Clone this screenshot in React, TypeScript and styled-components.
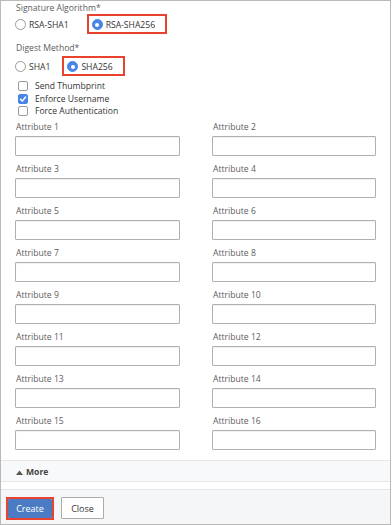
import React from 'react';
import styled, { createGlobalStyle } from 'styled-components';

const Global = createGlobalStyle`
  html, body { margin: 0; padding: 0; background: #fff; }
  body { font-family: "Open Sans", "Noto Sans", sans-serif; -webkit-font-smoothing: antialiased; }
  * { box-sizing: border-box; }
`;

const Panel = styled.div`
  width: 391px;
  height: 525px;
  border: 1px solid #b9b9b9;
  display: flex;
  flex-direction: column;
  background: #fff;
`;

const Body = styled.div`
  flex: 1;
  padding: 1px 14px 10px 14px;
  display: flex;
  flex-direction: column;
`;

const GroupLabel = styled.div<{ $mt?: number }>`
  font-size: 8.6px;
  line-height: 12px;
  height: 12px;
  color: #5c5c5c;
  margin-top: ${(p) => p.$mt ?? 0}px;
  padding-left: 1px;
  white-space: nowrap;
`;

const RadioRow = styled.div<{ $gap: number; $mt?: number }>`
  display: flex;
  align-items: center;
  height: 20px;
  gap: ${(p) => p.$gap}px;
  margin-top: ${(p) => p.$mt ?? 0}px;
`;

const RadioOption = styled.div<{ $boxed?: boolean }>`
  display: flex;
  align-items: center;
  gap: 3px;
  height: 20px;
  padding: ${(p) => (p.$boxed ? '1px 10px 0 3px' : '1px 0 0 0')};
  border: ${(p) => (p.$boxed ? '2px solid #e8432f' : 'none')};
  font-size: 8.6px;
  color: #333;
  white-space: nowrap;
`;

const RadioDot = styled.span<{ $on?: boolean }>`
  width: 11px;
  height: 11px;
  border-radius: 50%;
  flex: none;
  border: 1px solid ${(p) => (p.$on ? '#4a86e8' : '#9a9a9a')};
  background: ${(p) => (p.$on ? '#4a86e8' : '#fff')};
  display: flex;
  align-items: center;
  justify-content: center;
  &::after {
    content: '';
    width: 4px;
    height: 4px;
    border-radius: 50%;
    background: #fff;
    display: ${(p) => (p.$on ? 'block' : 'none')};
  }
`;

const CheckList = styled.div`
  margin-top: 4px;
  display: flex;
  flex-direction: column;
  padding-left: 3px;
`;

const CheckRow = styled.div`
  display: flex;
  align-items: center;
  gap: 7px;
  height: 12.5px;
  font-size: 8.6px;
  color: #333;
  white-space: nowrap;
`;

const CheckBox = styled.span<{ $on?: boolean }>`
  width: 10px;
  height: 10px;
  border-radius: 2px;
  flex: none;
  border: 1px solid ${(p) => (p.$on ? '#4a86e8' : '#9a9a9a')};
  background: ${(p) => (p.$on ? '#4a86e8' : '#fff')};
  display: flex;
  align-items: center;
  justify-content: center;
`;

const Grid = styled.div`
  margin-top: 3.5px;
  display: grid;
  grid-template-columns: 165px 164px;
  column-gap: 32px;
`;

const Field = styled.div<{ $last?: boolean }>`
  display: flex;
  flex-direction: column;
  margin-bottom: ${(p) => (p.$last ? 0 : 7)}px;
`;

const FieldLabel = styled.div`
  font-size: 8.6px;
  line-height: 12px;
  height: 12px;
  color: #5c5c5c;
  margin-bottom: 3px;
  padding-left: 1px;
`;

const Input = styled.div`
  height: 20px;
  border: 1px solid #b0b0b0;
  border-radius: 1px;
  background: #fff;
  box-shadow: inset 0 1px 1px rgba(0, 0, 0, 0.06);
`;

const MoreBar = styled.div`
  height: 22px;
  border-top: 1px solid #e6e7e9;
  border-bottom: 1px solid #e6e7e9;
  background: #f8f9fa;
  display: flex;
  align-items: center;
  gap: 3px;
  padding: 2px 0 0 15px;
  font-size: 8.6px;
  font-weight: 700;
  color: #444;
`;

const Spacer = styled.div`
  height: 7px;
`;

const Footer = styled.div`
  height: 35px;
  border-top: 1px solid #e4e5e8;
  background: #f5f6f8;
  display: flex;
  align-items: flex-start;
  gap: 7px;
  padding: 7px 0 0 5px;
`;

const Highlight = styled.div`
  border: 2px solid #e8432f;
  display: flex;
`;

const Button = styled.button<{ $primary?: boolean }>`
  font-family: "Open Sans", "Noto Sans", sans-serif;
  font-size: 9px;
  height: ${(p) => (p.$primary ? 19 : 22)}px;
  width: ${(p) => (p.$primary ? 44 : 43)}px;
  padding: 0;
  margin: 0;
  border-radius: 1px;
  border: ${(p) => (p.$primary ? 'none' : '1px solid #ababab')};
  background: ${(p) => (p.$primary ? '#4b7cc3' : '#fff')};
  color: ${(p) => (p.$primary ? '#fff' : '#333')};
  cursor: pointer;
`;

const Check = () => (
  <svg width="8" height="8" viewBox="0 0 8 8">
    <path d="M1.5 4.2 L3.3 6 L6.6 2" fill="none" stroke="#fff" strokeWidth="1.4" strokeLinecap="round" strokeLinejoin="round" />
  </svg>
);

const Triangle = () => (
  <svg width="7" height="5" viewBox="0 0 7 5">
    <path d="M0 5 L3.5 0.5 L7 5 Z" fill="#555" />
  </svg>
);

export default function App() {
  const attrs = Array.from({ length: 16 }, (_, i) => i + 1);
  return (
    <>
      <Global />
      <Panel>
        <Body>
          <GroupLabel>Signature Algorithm*</GroupLabel>
          <RadioRow $gap={18}>
            <RadioOption>
              <RadioDot />
              RSA-SHA1
            </RadioOption>
            <RadioOption $boxed>
              <RadioDot $on />
              RSA-SHA256
            </RadioOption>
          </RadioRow>
          <GroupLabel $mt={8}>Digest Method*</GroupLabel>
          <RadioRow $gap={12} $mt={2}>
            <RadioOption>
              <RadioDot />
              SHA1
            </RadioOption>
            <RadioOption $boxed>
              <RadioDot $on />
              SHA256
            </RadioOption>
          </RadioRow>
          <CheckList>
            <CheckRow>
              <CheckBox />
              Send Thumbprint
            </CheckRow>
            <CheckRow>
              <CheckBox $on>
                <Check />
              </CheckBox>
              Enforce Username
            </CheckRow>
            <CheckRow>
              <CheckBox />
              Force Authentication
            </CheckRow>
          </CheckList>
          <Grid>
            {attrs.map((n) => (
              <Field key={n} $last={n > 14}>
                <FieldLabel>Attribute {n}</FieldLabel>
                <Input />
              </Field>
            ))}
          </Grid>
        </Body>
        <MoreBar>
          <Triangle />
          More
        </MoreBar>
        <Spacer />
        <Footer>
          <Highlight>
            <Button $primary>Create</Button>
          </Highlight>
          <Button>Close</Button>
        </Footer>
      </Panel>
    </>
  );
}
